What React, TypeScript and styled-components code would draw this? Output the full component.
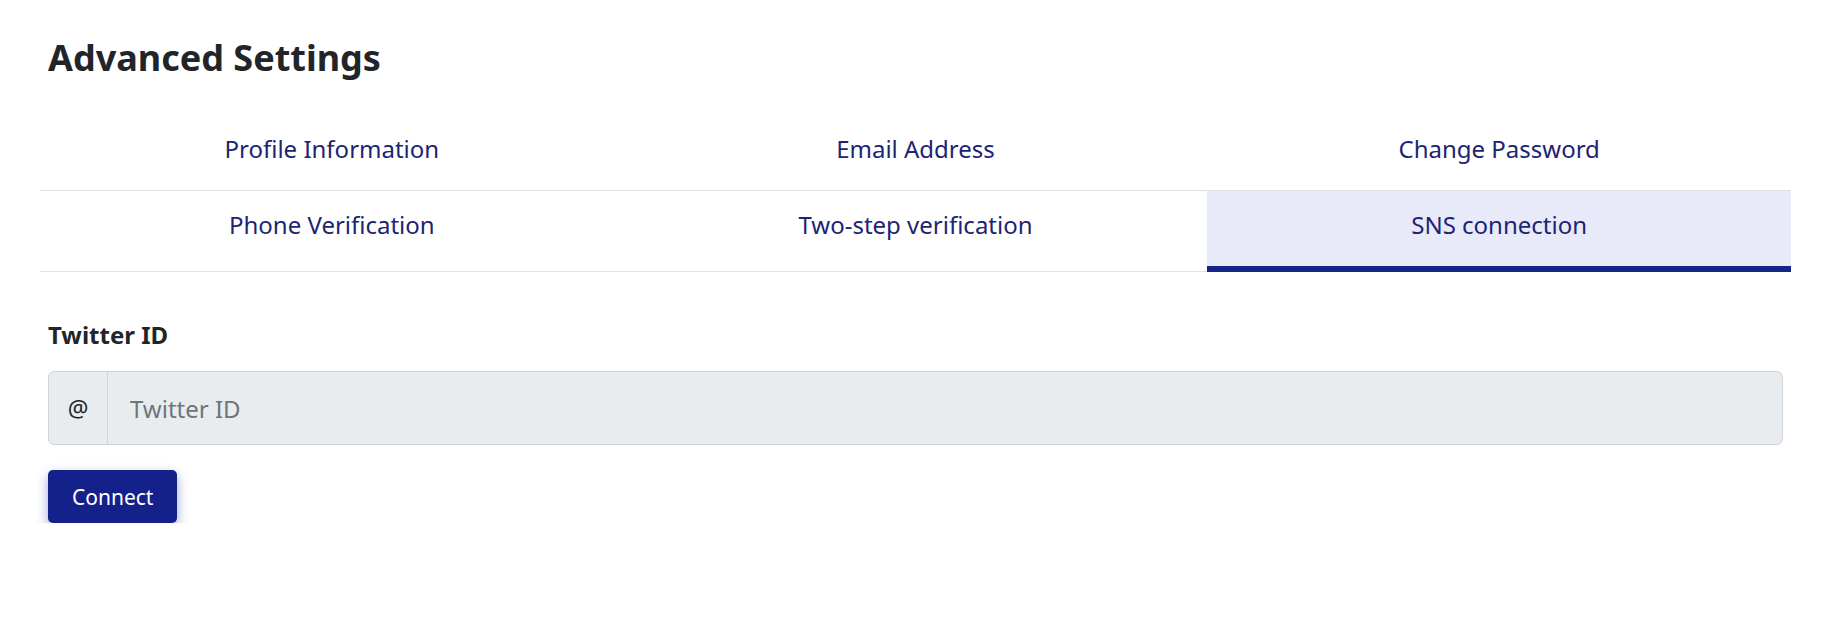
import React from "react";
import styled, { createGlobalStyle } from "styled-components";

const GlobalStyle = createGlobalStyle`
  * { box-sizing: border-box; }
  body {
    margin: 0;
    background: #ffffff;
    font-family: "Noto Sans", "Open Sans", sans-serif;
    color: #212529;
  }
`;

const Page = styled.div`
  padding: 36px 39px 0 48px;
`;

const Title = styled.h2`
  margin: 0;
  font-size: 36px;
  line-height: 1.2;
  font-weight: 700;
  color: #212529;
`;

const Tabs = styled.nav`
  display: grid;
  grid-template-columns: repeat(3, 1fr);
  margin: 36px -8px 0;
`;

const Tab = styled.a<{ $active?: boolean }>`
  display: block;
  text-align: center;
  font-size: 24px;
  line-height: 33px;
  padding: 17px 16px 25px;
  color: #1c2473;
  text-decoration: none;
  cursor: pointer;
  background: ${(p) => (p.$active ? "#e8eaf9" : "transparent")};
  border-bottom: ${(p) => (p.$active ? "6px solid #15238a" : "1px solid #dee2e6")};
`;

const Form = styled.div`
  padding-top: 45px;
`;

const Label = styled.label`
  display: block;
  font-size: 24px;
  font-weight: 700;
  line-height: 36px;
  color: #212529;
  margin-bottom: 18px;
`;

const InputGroup = styled.div`
  display: flex;
  height: 74px;
  border: 1px solid #ced4da;
  border-radius: 6px;
  background: #e9ecef;
  overflow: hidden;
`;

const Addon = styled.span`
  display: flex;
  align-items: center;
  justify-content: center;
  width: 59px;
  border-right: 1px solid #ced4da;
  font-size: 23px;
  color: #212529;
`;

const Field = styled.input`
  flex: 1;
  border: 0;
  background: transparent;
  padding: 0 22px;
  font-family: inherit;
  font-size: 24px;
  color: #212529;
  outline: none;
  &::placeholder { color: #6c757d; }
`;

const Button = styled.button`
  margin-top: 25px;
  height: 53px;
  padding: 0 24px;
  border: 0;
  border-radius: 5px;
  background: #15218a;
  color: #ffffff;
  font-family: inherit;
  font-size: 21px;
  cursor: pointer;
  box-shadow: 0 5px 12px rgba(40, 50, 180, 0.45);
`;

const tabs = [
  "Profile Information",
  "Email Address",
  "Change Password",
  "Phone Verification",
  "Two-step verification",
  "SNS connection",
];

export default function App() {
  return (
    <>
      <GlobalStyle />
      <Page>
        <Title>Advanced Settings</Title>
        <Tabs>
          {tabs.map((t) => (
            <Tab key={t} $active={t === "SNS connection"}>
              {t}
            </Tab>
          ))}
        </Tabs>
        <Form>
          <Label htmlFor="twitter">Twitter ID</Label>
          <InputGroup>
            <Addon>@</Addon>
            <Field id="twitter" placeholder="Twitter ID" />
          </InputGroup>
          <Button>Connect</Button>
        </Form>
      </Page>
    </>
  );
}
